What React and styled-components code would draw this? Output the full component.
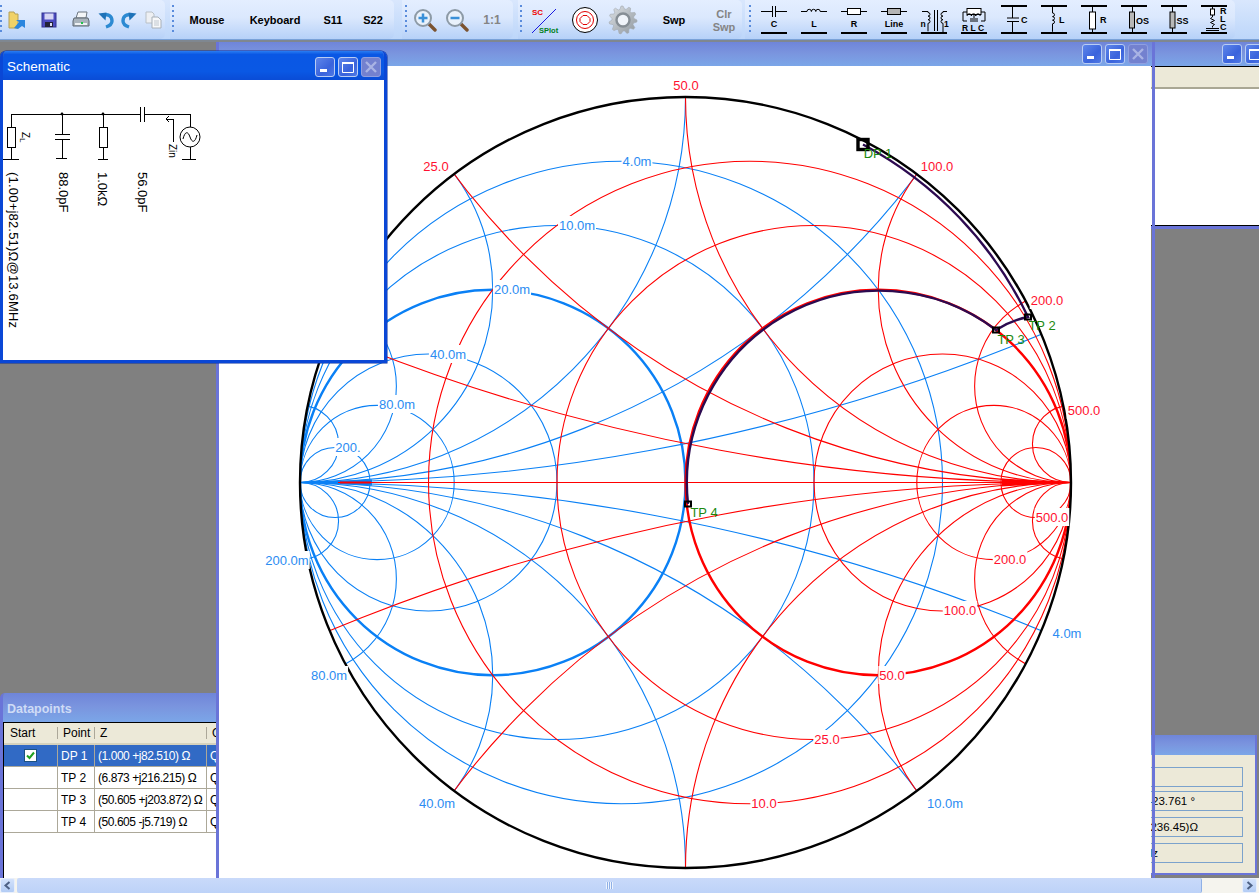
import React from "react";
import styled, { createGlobalStyle } from "styled-components";

const GlobalStyle = createGlobalStyle`
	html, body {
		margin: 0;
		padding: 0;
		overflow: hidden;
		background: #808080;
		font-family: "Liberation Sans", Arial, sans-serif;
	}
`;

const Page = styled.div`
	display: flex;
	flex-direction: column;
	width: 1259px;
	height: 893px;
	overflow: hidden;
`;

/* ---------- toolbar ---------- */

const Toolbar = styled.div`
	display: flex;
	flex: none;
	height: 40px;
	background: linear-gradient(#d9e7fd, #bcd6fa);
	border-bottom: 2px solid #7f8790;
	box-shadow: inset 0 -1px 0 #7aa2d8;
`;
const Band = styled.div`
	display: flex;
	align-items: center;
	flex: none;
	width: ${(p) => p.$width}px;
	height: 39px;
	margin-left: ${(p) => p.$gap || 0}px;
	border-radius: 0 5px 5px 0;
	background: linear-gradient(#e4eeff 0%, #dbe8fd 45%, #b6d1f8 100%);
`;
const Grip = styled.div`
	flex: none;
	width: 2px;
	height: 30px;
	margin-left: ${(p) => p.$at}px;
	margin-right: ${(p) => p.$after || 2}px;
	background: repeating-linear-gradient(to bottom, #5a8cdc 0 2px, transparent 2px 5px);
`;
const Tool = styled.div`
	display: flex;
	align-items: center;
	justify-content: center;
	flex: none;
	box-sizing: border-box;
	width: ${(p) => p.$width}px;
	height: 39px;
`;
const TextTool = styled(Tool)`
	padding-top: 2px;
	font-size: ${(p) => p.$size || 11}px;
	line-height: 13px;
	font-weight: 700;
	text-align: center;
	color: ${(p) => (p.$dim ? "#848484" : "#000")};
`;
const IconText = styled.text`
	font-family: "Liberation Sans", Arial, sans-serif;
	font-size: ${(p) => p.$size || 9}px;
	font-weight: 700;
	fill: ${(p) => p.$color || "#000"};
`;

const FolderIcon = () => (
	<svg width="20" height="20" viewBox="0 0 20 20">
		<path d="M2 2h5l1 2h3v14H2z" fill="#f1d268" stroke="#b3a05a" />
		<path d="M7 18l5-6-3-2h9v8l-3-2-4 3z" fill="#2b86de" />
	</svg>
);
const FloppyIcon = () => (
	<svg width="16" height="16" viewBox="0 0 16 16">
		<rect x="1" y="1" width="14" height="14" fill="#4c4cc0" stroke="#33338f" />
		<rect x="3.5" y="1.5" width="9" height="6" fill="#d6d6f4" />
		<rect x="4" y="10" width="8" height="5" fill="#222238" />
		<rect x="9" y="11" width="2" height="3" fill="#dcdcf0" />
	</svg>
);
const PrinterIcon = () => (
	<svg width="18" height="18" viewBox="0 0 18 18">
		<path d="M6 1h9l-1 6H4z" fill="#f4f6f8" stroke="#6d7780" />
		<path d="M2 7h14l1 3v5H1v-5z" fill="#a9b3bb" stroke="#5d6770" />
		<rect x="3" y="12" width="12" height="2" fill="#eef1f3" />
		<rect x="9" y="11" width="2" height="2" fill="#1fc24a" />
	</svg>
);
const UndoIcon = ({ flip }) => (
	<svg width="18" height="18" viewBox="0 0 18 18">
		<g transform={flip ? "translate(18 0) scale(-1 1)" : undefined}>
			<path d="M5 5c6-3 10 0 10 5 0 3-3 5-6 6" fill="none" stroke="#2c8ad2" strokeWidth="3.4" />
			<path d="M1.500 2.500l8-1-1 8z" fill="#1f73b8" />
		</g>
	</svg>
);
const CopyIcon = () => (
	<svg width="18" height="18" viewBox="0 0 18 18">
		<path d="M2 1h6l2 2v9H2z" fill="#eef0f3" stroke="#b9c0c6" />
		<path d="M8 6h6l3 3v8H8z" fill="#f7f8fa" stroke="#a8b0b8" />
		<path d="M10 10h5M10 12h5M10 14h5" stroke="#c0c7ce" />
	</svg>
);
const ZoomIcon = ({ plus }) => (
	<svg width="24" height="24" viewBox="0 0 24 24">
		<line x1="15" y1="15" x2="22" y2="22" stroke="#7b5330" strokeWidth="3.4" strokeLinecap="round" />
		<circle cx="10" cy="10" r="8" fill="#e9f1fb" stroke="#8d9aa6" strokeWidth="2" />
		<path d={plus ? "M5.500 10h9M10 5.500v9" : "M5.500 10h9"} stroke="#3a90d8" strokeWidth="2.5" />
	</svg>
);
const SplotIcon = () => (
	<svg width="30" height="30" viewBox="0 0 30 30">
		<IconText x="2" y="10" $size={8} $color="#f00000">SC</IconText>
		<line x1="2" y1="28" x2="26" y2="4" stroke="#1a1ae0" />
		<IconText x="9" y="28" $size={7.5} $color="#008020">SPlot</IconText>
	</svg>
);
const TargetIcon = () => (
	<svg width="28" height="28" viewBox="0 0 28 28">
		<circle cx="14" cy="14" r="12.500" fill="#fff" stroke="#000" />
		<circle cx="14" cy="14" r="8.500" fill="none" stroke="#e00000" />
		<path d="M12 9.500h4l3 3v3l-3 3h-4l-3-3v-3z" fill="none" stroke="#e00000" />
	</svg>
);

const gearPath = () => {
	const points = [];
	for (let i = 0; i < 44; i++) {
		const rad = i % 4 < 2 ? 14 : 11;
		const a = (i / 44) * Math.PI * 2;
		points.push(`${(16 + rad * Math.cos(a)).toFixed(1)} ${(16 + rad * Math.sin(a)).toFixed(1)}`);
	}
	return `M${points.join("L")}Z`;
};
const GearIcon = () => (
	<svg width="32" height="32" viewBox="0 0 32 32">
		<defs>
			<linearGradient id="gearFill" x1="0" y1="0" x2="1" y2="1">
				<stop offset="0" stopColor="#dde1e5" />
				<stop offset="1" stopColor="#8f979e" />
			</linearGradient>
		</defs>
		<path d={gearPath()} fill="url(#gearFill)" stroke="#a2a9b0" strokeWidth="0.6" />
		<circle cx="16" cy="16" r="6.500" fill="#f0f4fa" stroke="#868e95" strokeWidth="2.400" />
	</svg>
);

const coil = "a2.2 2.2 0 0 1 4.4 0a2.2 2.2 0 0 1 4.4 0a2.2 2.2 0 0 1 4.4 0";
const vcoil = "a2 1.8 0 0 1 0 3.6a2 1.8 0 0 1 0 3.6a2 1.8 0 0 1 0 3.6";

const PartIcon = ({ top, children }) => (
	<svg width="40" height="39" viewBox="0 0 40 39">
		{top && <rect x="7" y="5" width="26" height="2" fill="#000" />}
		<rect x="7" y="32" width="26" height="2" fill="#000" />
		<g fill="none" stroke="#000">{children}</g>
	</svg>
);

const partIcons = [
	<PartIcon key="c">
		<path d="M7 11.500h11.500M18.500 6v11M21.500 6v11M21.500 11.500H33" />
		<IconText x="20" y="27" textAnchor="middle" stroke="none">C</IconText>
	</PartIcon>,
	<PartIcon key="l">
		<path d={`M7 11.500h6${coil}H33`} />
		<IconText x="20" y="27" textAnchor="middle" stroke="none">L</IconText>
	</PartIcon>,
	<PartIcon key="r">
		<path d="M7 11.500h7M26 11.500h7" />
		<rect x="13.500" y="8.500" width="13" height="6" fill="#fff" />
		<IconText x="20" y="27" textAnchor="middle" stroke="none">R</IconText>
	</PartIcon>,
	<PartIcon key="line">
		<path d="M7 11.500h7M26 11.500h7" />
		<rect x="13.500" y="8.500" width="13" height="6" fill="#b4b4b4" />
		<IconText x="20" y="27" textAnchor="middle" stroke="none">Line</IconText>
	</PartIcon>,
	<PartIcon key="tr">
		<path d={`M8 11.500h6v1${vcoil}v8`} />
		<path d={`M33 11.500h-4v1${"a2 1.8 0 0 0 0 3.6".repeat(3)}V32`} />
		<path d="M20.500 10v21M23.500 10v21" />
		<IconText x="6.500" y="27" $size={8.5} stroke="none">n</IconText>
		<IconText x="30" y="27" $size={8.5} stroke="none">1</IconText>
	</PartIcon>,
	<PartIcon key="rlc">
		<path d="M9 12h4M27 12h4M9 12v9h4M31 12v9h-4" />
		<rect x="13" y="8.500" width="14" height="6" fill="#fff" />
		<path d={`M10 15${coil}`} transform="translate(3 1)" />
		<path d="M20 15v3M16 19h8M16 21h8" />
		<IconText x="8" y="31" $size={8.5} stroke="none">R L C</IconText>
	</PartIcon>,
	<PartIcon key="sc" top>
		<path d="M18.500 7v11M13 18h12M13 21.500h12M18.500 21.500V32" />
		<IconText x="27" y="23" stroke="none">C</IconText>
	</PartIcon>,
	<PartIcon key="sl" top>
		<path d={`M18.500 7v6${vcoil}v8`} />
		<IconText x="25" y="23" stroke="none">L</IconText>
	</PartIcon>,
	<PartIcon key="sr" top>
		<path d="M18.500 7v5M18.500 28v4" />
		<rect x="15.500" y="12" width="6" height="17" fill="#fff" />
		<IconText x="26" y="23" stroke="none">R</IconText>
	</PartIcon>,
	<PartIcon key="os" top>
		<path d="M18.500 7v5M18.500 28v4" />
		<rect x="15.500" y="12" width="5" height="16" fill="#b8b8b8" />
		<IconText x="22" y="24" stroke="none">OS</IconText>
	</PartIcon>,
	<PartIcon key="ss" top>
		<path d="M18.500 7v5M18.500 28v4" />
		<rect x="16" y="12" width="5" height="16" fill="#b8b8b8" />
		<IconText x="22.500" y="24" stroke="none">SS</IconText>
	</PartIcon>,
	<PartIcon key="src" top>
		<path d="M18.500 7v2M18.500 15v2M18.500 17l-2 1.500 4 2-4 2 4 2-2 1.500v1.500M12 28.500h13M12 30.500h13" />
		<rect x="16.500" y="9" width="4" height="6" fill="#fff" />
		<IconText x="26" y="14" stroke="none">R</IconText>
		<IconText x="26" y="22" stroke="none">L</IconText>
		<IconText x="26" y="30" stroke="none">C</IconText>
	</PartIcon>,
];

/* ---------- windows ---------- */

const Desktop = styled.div`
	position: relative;
	flex: 1;
	background: #808080;
	overflow: hidden;
`;
const Frame = styled.div`
	position: absolute;
	display: flex;
	flex-direction: column;
	box-sizing: border-box;
	border: 3px solid #6a74d8;
	border-top: 0;
	overflow: hidden;
`;
const MainWindow = styled(Frame)`
	left: 216px;
	top: 0;
	width: 939px;
	height: 836px;
	border-bottom: 0;
	z-index: 2;
`;
const PanelWindow = styled(Frame)`
	left: 1100px;
	top: 0;
	width: 195px;
	height: 187px;
	z-index: 1;
`;
const SchematicWindow = styled(Frame)`
	left: 0;
	top: 9px;
	width: 387px;
	height: 312px;
	border-color: #0a47d6;
	border-radius: 6px 6px 0 0;
	box-shadow: 0 0 0 0.5px #0a2f9a;
	z-index: 3;
`;
const DataWindow = styled(Frame)`
	left: 0;
	top: 651px;
	width: 230px;
	height: 185px;
	border-width: 0 3px 0 3px;
	border-radius: 5px 0 0 0;
	z-index: 1;
`;
const StatusWindow = styled(Frame)`
	left: 1100px;
	top: 693px;
	width: 157px;
	height: 140px;
	border-width: 0 2px 2px 0;
	z-index: 1;
`;
const TitleBar = styled.div`
	display: flex;
	align-items: center;
	justify-content: space-between;
	flex: none;
	box-sizing: border-box;
	height: ${(p) => p.$height}px;
	padding: ${(p) => p.$drop || 0}px ${(p) => p.$pad || 4}px 0 ${(p) => p.$inset || 4}px;
	margin: 0 ${(p) => (p.$active ? -3 : 0)}px;
	background: ${(p) =>
		p.$active
			? "linear-gradient(#2a7df2 0, #0a57e4 12%, #0a58e4 70%, #0a4cd6 100%)"
			: "linear-gradient(#6f85d9 0, #7a94de 45%, #7ba6e8 100%)"};
`;
const TitleText = styled.span`
	font-size: ${(p) => p.$size || 13.5}px;
	color: ${(p) => (p.$active ? "#fff" : "#cfdcf6")};
	font-weight: ${(p) => (p.$active ? 400 : 700)};
`;
const TitleButtons = styled.div`
	display: flex;
	gap: 3px;
`;
const TitleButton = styled.div`
	display: flex;
	align-items: center;
	justify-content: center;
	box-sizing: border-box;
	width: 20px;
	height: 20px;
	border: 1px solid ${(p) => (p.$off ? "#8f9fe0" : "#b9cdf4")};
	border-radius: 3px;
	background: ${(p) => (p.$off ? "#7381cf" : "linear-gradient(135deg, #5f86ea, #3a63dc 60%, #4f78e4)")};
`;

const WindowButtons = () => (
	<TitleButtons>
		<TitleButton>
			<svg width="12" height="12" viewBox="0 0 12 12">
				<rect x="1" y="8" width="7" height="3" fill="#fff" />
			</svg>
		</TitleButton>
		<TitleButton>
			<svg width="14" height="14" viewBox="0 0 14 14">
				<path d="M1.500 3.500h11v9h-11z" fill="none" stroke="#fff" />
				<rect x="1" y="2" width="12" height="2" fill="#fff" />
			</svg>
		</TitleButton>
		<TitleButton $off>
			<svg width="14" height="14" viewBox="0 0 14 14">
				<path d="M2 2l10 10M12 2L2 12" stroke="#a9b3e4" strokeWidth="2.4" />
			</svg>
		</TitleButton>
	</TitleButtons>
);

/* ---------- smith chart ---------- */

const CX = 685.5;
const CY = 482.5;
const R = 385.5;
const LEFT = CX - R;
const RIGHT = CX + R;
const STEPS = [0.2, 0.5, 1, 2, 4, 10];
const RED = "#ff0000";
const BLUE = "#0a80f5";

const ChartSvg = styled.svg`
	display: block;
	flex: none;
	background: #fff;
`;
const Curve = styled.circle`
	fill: none;
	stroke: ${(p) => p.$color};
	stroke-width: ${(p) => (p.$wide ? 2.4 : 1.1)}px;
`;
const LabelText = styled.text`
	font-family: "Liberation Sans", Arial, sans-serif;
	font-size: 13px;
	fill: ${(p) => p.$color};
	text-anchor: middle;
`;
const TraceLine = styled.path`
	fill: none;
	stroke: #2c0a50;
	stroke-width: 2.4px;
`;
const Marker = styled.rect`
	fill: none;
	stroke: #000;
	stroke-width: ${(p) => p.$weight}px;
`;

const textWidth = (s) =>
	[...s].reduce((sum, c) => sum + (c === "." ? 3.6 : c === "m" ? 10.83 : 7.23), 0);

const ChartLabel = ({ x, y, color, text }) => {
	const w = textWidth(text) + 2;
	return (
		<g>
			<rect x={x - w / 2} y={y - 9} width={w} height={18} fill="#fff" />
			<LabelText x={x} y={y + 4.5} $color={color}>
				{text}
			</LabelText>
		</g>
	);
};

const redLabels = [
	["50.0", 686, 85],
	["25.0", 436, 166],
	["100.0", 937, 166],
	["200.0", 1047, 300],
	["500.0", 1084, 410],
	["500.0", 1052, 517],
	["200.0", 1010, 559],
	["100.0", 960, 610],
	["50.0", 892, 675],
	["25.0", 827, 739],
	["10.0", 764, 803],
];
const blueLabels = [
	["4.0m", 637, 161],
	["10.0m", 577, 225],
	["20.0m", 512, 289],
	["40.0m", 448, 354],
	["80.0m", 397, 404],
	["200.", 348, 447],
	["200.0m", 287, 560],
	["80.0m", 329, 675],
	["40.0m", 437, 803],
	["10.0m", 945, 803],
	["4.0m", 1067, 633],
];
const tracePoints = [
	["TP 2", 1028, 317, 1042, 325],
	["TP 3", 996, 330, 1011, 339],
	["TP 4", 688, 504, 704, 512],
];

const familyCircles = (anchor, side, color) => (
	<g clipPath="url(#chartEdge)">
		{STEPS.map((k) => {
			const r = R / (1 + k);
			return <Curve key={k} cx={anchor + side * r} cy={CY} r={r} $color={color} $wide={k === 1} />;
		})}
		{STEPS.map((k) => (
			<g key={k}>
				<Curve cx={anchor} cy={CY - R / k} r={R / k} $color={color} />
				<Curve cx={anchor} cy={CY + R / k} r={R / k} $color={color} />
			</g>
		))}
	</g>
);

const SmithChart = () => (
	<ChartSvg width="932" height="812" viewBox="219 66 932 812">
		<defs>
			<clipPath id="chartEdge">
				<circle cx={CX} cy={CY} r={R} />
			</clipPath>
		</defs>
		{familyCircles(LEFT, 1, BLUE)}
		<path d={`M${LEFT} ${CY}L372 ${CY - 3}V${CY + 3}Z`} fill={BLUE} />
		{familyCircles(RIGHT, -1, RED)}
		<line x1={338} y1={CY} x2={RIGHT} y2={CY} stroke={RED} />
		<line x1={340} y1={CY} x2={371} y2={CY} stroke={RED} strokeWidth="2" />
		<path d={`M${RIGHT} ${CY}L1002 ${CY - 4}V${CY + 4}Z`} fill={RED} />
		<circle cx={CX} cy={CY} r={R} fill="none" stroke="#000" strokeWidth="2.4" />
		{redLabels.map(([t, x, y], i) => (
			<ChartLabel key={i} x={x} y={y} text={t} color="#ff1030" />
		))}
		{blueLabels.map(([t, x, y], i) => (
			<ChartLabel key={i} x={x} y={y} text={t} color="#2b8cf2" />
		))}
		<TraceLine d="M863 144.500A382 382 0 0 1 1028 317Q1012 320 996 330A192.500 192.500 0 0 0 688 504" />
		<Marker x="858" y="139.500" width="10" height="10" $weight={3.4} />
		<LabelText x="878" y="157.500" $color="#1c8a10">
			DP 1
		</LabelText>
		{tracePoints.map(([t, x, y, lx, ly]) => (
			<g key={t}>
				<Marker x={x - 3} y={y - 2.5} width="6" height="5" $weight={2} />
				<LabelText x={lx} y={ly + 4.5} $color="#1c8a10">
					{t}
				</LabelText>
			</g>
		))}
	</ChartSvg>
);

/* ---------- schematic ---------- */

const SchematicBody = styled.svg`
	display: block;
	flex: 1;
	background: #fff;
`;
const SideText = styled.text`
	font-family: "Liberation Sans", Arial, sans-serif;
	font-size: ${(p) => p.$size || 13}px;
	letter-spacing: ${(p) => p.$track || 0}px;
	fill: #000;
`;

const sideLabels = [
	["(1.00+j82.51)Ω@13.6MHz", 9, 172, 0.2],
	["88.0pF", 59, 172, 0],
	["1.0kΩ", 98, 172, 0],
	["56.0pF", 138, 172, 0],
];

const SchematicDrawing = () => (
	<SchematicBody viewBox="3 80 381 280">
		<g fill="none" stroke="#000" shapeRendering="crispEdges">
			<path d="M11 127V114H140M145 114H190V127M190 147V159M182 159H196" />
			<rect x="7.500" y="127.500" width="8" height="20" />
			<path d="M11 147.500V159M3 159H19" />
			<path d="M62 114V134M55 134H70M55 139H70M62 139V158M56 158H67" />
			<rect x="99.500" y="127.500" width="8" height="20" />
			<path d="M103 114V127M103 147.500V159M98 159H108" />
			<path d="M140.500 107V122M144.500 107V122" />
			<path d="M173 142V119H166M169 116L166 119L169 122" />
		</g>
		<circle cx="62" cy="114" r="1.4" fill="#000" />
		<circle cx="103" cy="114" r="1.4" fill="#000" />
		<circle cx="190" cy="137" r="10" fill="none" stroke="#000" />
		<path d="M183 139c2-8 5-8 7-2s5 6 7-2" fill="none" stroke="#000" />
		{sideLabels.map(([t, x, y, track]) => (
			<SideText key={t} x={x} y={y} $track={track} transform={`rotate(90 ${x} ${y})`}>
				{t}
			</SideText>
		))}
		<SideText x="169" y="144" $size={10} transform="rotate(90 169 144)">
			Zin
		</SideText>
		<SideText x="22" y="132" $size={10} transform="rotate(90 22 132)">
			Z<tspan dy="2" fontSize="8">L</tspan>
		</SideText>
	</SchematicBody>
);

/* ---------- datapoints ---------- */

const GridBox = styled.div`
	flex: 1;
	background: #fff;
	border: 1px solid #000;
	border-right: 0;
	border-bottom: 0;
	font-size: 12px;
`;
const columns = "54px 37px 112px 1fr";
const HeadRow = styled.div`
	display: grid;
	grid-template-columns: ${columns};
	height: 20px;
	align-items: center;
	background: #ece9d8;
	border-bottom: 2px solid #d6d2bd;
	color: #000;
`;
const HeadCell = styled.div`
	height: 12px;
	line-height: 12px;
	padding-left: 5px;
	margin-left: -1px;
	border-left: 1px solid #aca899;
	&:first-child {
		border-left: 0;
		padding-left: 7px;
	}
`;
const DataRow = styled.div`
	display: grid;
	grid-template-columns: ${columns};
	height: 22px;
	box-sizing: border-box;
	border-bottom: 1px solid #aca899;
	background: ${(p) => (p.$selected ? "#316ac5" : "#fff")};
	color: ${(p) => (p.$selected ? "#fff" : "#000")};
`;
const DataCell = styled.div`
	display: flex;
	align-items: center;
	justify-content: ${(p) => (p.$center ? "center" : "flex-start")};
	padding-left: ${(p) => (p.$center ? 0 : 3)}px;
	border-right: 1px solid #aca899;
	letter-spacing: ${(p) => (p.$tight ? -0.45 : 0)}px;
	white-space: nowrap;
	overflow: hidden;
`;
const CheckBox = styled.div`
	display: flex;
	align-items: center;
	justify-content: center;
	width: 11px;
	height: 11px;
	background: #fff;
	border: 1px solid #1c5180;
`;

const rows = [
	["DP 1", "(1.000 +j82.510) Ω", true],
	["TP 2", "(6.873 +j216.215) Ω", false],
	["TP 3", "(50.605 +j203.872) Ω", false],
	["TP 4", "(50.605 -j5.719) Ω", false],
];

/* ---------- right hand panels ---------- */

const PanelHead = styled.div`
	flex: none;
	height: 20px;
	background: #ece9d8;
	border-top: 1px solid #000;
	border-bottom: 2px solid #a9a794;
`;
const PanelBody = styled.div`
	flex: 1;
	background: #fff;
	border-bottom: 1px solid #000;
`;
const Cursor = styled.svg`
	position: absolute;
	left: 1224px;
	top: 65px;
`;
const StatusBody = styled.div`
	display: flex;
	flex-direction: column;
	flex: 1;
	padding: 12px 12px 0 0;
	background: #ece9d8;
	font-size: 11.5px;
	color: #000;
`;
const Field = styled.div`
	box-sizing: border-box;
	height: 20px;
	line-height: 18px;
	margin-top: ${(p) => p.$gap || 0}px;
	padding-right: ${(p) => p.$right}px;
	border: 1px solid #7ba2cc;
	text-align: right;
	white-space: nowrap;
`;

/* ---------- scrollbar ---------- */

const ScrollBar = styled.div`
	display: flex;
	align-items: stretch;
	flex: none;
	height: 15px;
	background: #f5f4ee;
`;
const ScrollButton = styled.div`
	display: flex;
	align-items: center;
	justify-content: center;
	flex: none;
	width: 15px;
	margin-left: ${(p) => p.$push || 0}px;
	background: linear-gradient(#d3e2fb, #b3ccf5);
	border: 1px solid #e8effc;
	box-sizing: border-box;
	border-radius: 2px;
`;
const ScrollThumb = styled.div`
	display: flex;
	align-items: center;
	justify-content: center;
	flex: none;
	width: 1185px;
	margin-left: 2px;
	box-sizing: border-box;
	background: linear-gradient(#c9dafa, #bdd2f8);
	border-right: 1px solid #8fb0e6;
	border-radius: 2px;
`;
const ThumbGrip = styled.div`
	width: 7px;
	height: 7px;
	background: repeating-linear-gradient(to right, #eef4fe 0 1px, #8fb0e6 1px 2px);
`;

const App = () => {
	return (
		<Page>
			<GlobalStyle />
			<Toolbar>
				<Band $width={165}>
					<Grip $at={0} />
					<Tool $width={26}><FolderIcon /></Tool>
					<Tool $width={38}><FloppyIcon /></Tool>
					<Tool $width={26}><PrinterIcon /></Tool>
					<Tool $width={23}><UndoIcon /></Tool>
					<Tool $width={24}><UndoIcon flip /></Tool>
					<Tool $width={24}><CopyIcon /></Tool>
				</Band>
				<Band $width={224} $gap={5}>
					<Grip $at={2} />
					<TextTool $width={62}>Mouse</TextTool>
					<TextTool $width={74}>Keyboard</TextTool>
					<TextTool $width={42}>S11</TextTool>
					<TextTool $width={38}>S22</TextTool>
				</Band>
				<Band $width={111} $gap={8}>
					<Grip $at={3} />
					<Tool $width={32}><ZoomIcon plus /></Tool>
					<Tool $width={32}><ZoomIcon /></Tool>
					<TextTool $width={38} $size={12} $dim>1:1</TextTool>
				</Band>
				<Band $width={224} $gap={5}>
					<Grip $at={2} />
					<Tool $width={42}><SplotIcon /></Tool>
					<Tool $width={38}><TargetIcon /></Tool>
					<Tool $width={38}><GearIcon /></Tool>
					<TextTool $width={64}>Swp</TextTool>
					<TextTool $width={36} $dim>Clr<br />Swp</TextTool>
				</Band>
				<Band $width={490} $gap={3}>
					<Grip $at={4} $after={3} />
					{partIcons.map((icon) => (
						<Tool key={icon.key} $width={40}>{icon}</Tool>
					))}
				</Band>
			</Toolbar>
			<Desktop>
				<PanelWindow>
					<TitleBar $height={24} $pad={4}>
						<span />
						<WindowButtons />
					</TitleBar>
					<PanelHead />
					<PanelBody />
				</PanelWindow>
				<Cursor width="14" height="23" viewBox="0 0 14 23">
					<path d="M.5.5V17.500L4.500 13.500L8 21.500L11 20.500L7.500 12.500H13Z" fill="#fff" stroke="#000" />
				</Cursor>
				<StatusWindow>
					<TitleBar $height={20} />
					<StatusBody>
						<Field $right={0} />
						<Field $right={47} $gap={4}>-23.761 °</Field>
						<Field $right={44} $gap={6}>(236.45)Ω</Field>
						<Field $right={84} $gap={6}>MHz</Field>
					</StatusBody>
				</StatusWindow>
				<DataWindow>
					<TitleBar $height={29} $inset={4} $drop={2}>
						<TitleText $size={12.5}>Datapoints</TitleText>
					</TitleBar>
					<GridBox>
						<HeadRow>
							<HeadCell>Start</HeadCell>
							<HeadCell>Point</HeadCell>
							<HeadCell>Z</HeadCell>
							<HeadCell>Q</HeadCell>
						</HeadRow>
						{rows.map(([name, z, selected]) => (
							<DataRow key={name} $selected={selected}>
								<DataCell $center>
									{selected && (
										<CheckBox>
											<svg width="9" height="9" viewBox="0 0 9 9">
												<path d="M1 4.500L3.500 7L8 1.500" fill="none" stroke="#21a121" strokeWidth="2" />
											</svg>
										</CheckBox>
									)}
								</DataCell>
								<DataCell>{name}</DataCell>
								<DataCell $tight>{z}</DataCell>
								<DataCell>Q</DataCell>
							</DataRow>
						))}
					</GridBox>
				</DataWindow>
				<MainWindow>
					<TitleBar $height={24} $pad={4}>
						<span />
						<WindowButtons />
					</TitleBar>
					<SmithChart />
				</MainWindow>
				<SchematicWindow>
					<TitleBar $height={29} $active $pad={6} $inset={7} $drop={2}>
						<TitleText $active>Schematic</TitleText>
						<WindowButtons />
					</TitleBar>
					<SchematicDrawing />
				</SchematicWindow>
			</Desktop>
			<ScrollBar>
				<ScrollButton>
					<svg width="9" height="9" viewBox="0 0 9 9">
						<path d="M6.500 1L2.500 4.500L6.500 8" fill="none" stroke="#4d6185" strokeWidth="2" />
					</svg>
				</ScrollButton>
				<ScrollThumb>
					<ThumbGrip />
				</ScrollThumb>
				<ScrollButton $push={40}>
					<svg width="9" height="9" viewBox="0 0 9 9">
						<path d="M2.500 1L6.500 4.500L2.500 8" fill="none" stroke="#4d6185" strokeWidth="2" />
					</svg>
				</ScrollButton>
			</ScrollBar>
		</Page>
	);
};

export default App;
